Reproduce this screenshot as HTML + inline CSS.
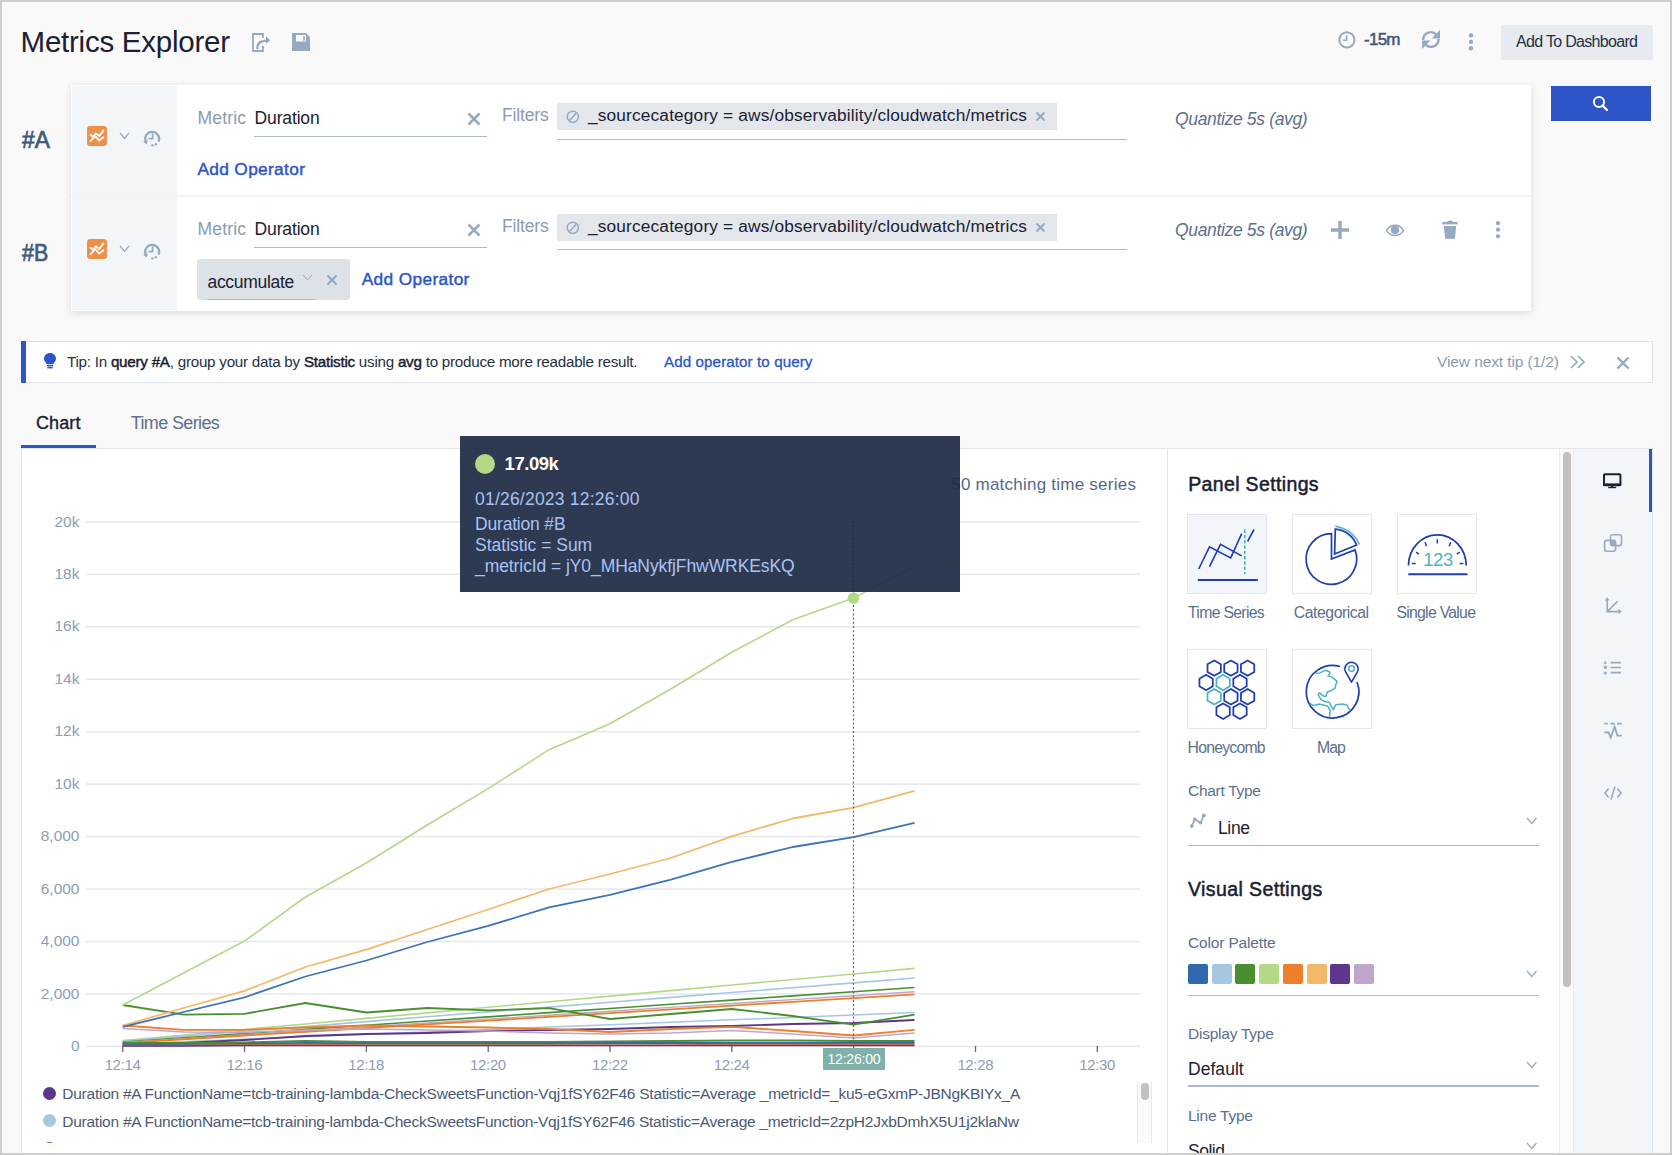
<!DOCTYPE html>
<html><head><meta charset="utf-8"><style>
html,body{margin:0;padding:0}
body{width:1672px;height:1155px;overflow:hidden;background:#cfcfcf;position:relative;font-family:"Liberation Sans",sans-serif}
#pg{position:absolute;left:2px;top:2px;width:1668px;height:1151px;background:#f9f9f9;overflow:hidden}
#in{position:absolute;left:-2px;top:-2px;width:1672px;height:1155px}
.a{position:absolute}
.t{position:absolute;white-space:nowrap;line-height:1}
b{font-weight:normal;-webkit-text-stroke:0.45px currentColor;color:#1b2132}
</style></head><body><div id="pg"><div id="in">
<div class="t" style="left:20.60px;top:27.02px;font-size:29.5px;color:#1b2132;font-weight:normal;font-style:normal;letter-spacing:-0.247px;">Metrics Explorer</div><svg class="a" style="left:250px;top:31px" width="24" height="22" viewBox="0 0 24 22">
<path d="M13 7 V3 H3 V20 H13 V15" fill="none" stroke="#97a9c0" stroke-width="1.8"/>
<path d="M6.2 18 C6.2 12 9 9 14 9 L16 9 L16 5 L20.2 9.2 L16 13 L16 11 C11 11 8.5 13 8.5 18 Z" fill="#97a9c0"/>
</svg><svg class="a" style="left:292px;top:33px" width="18" height="18" viewBox="0 0 18 18">
<path d="M0 0 H14 L18 4 V18 H0 Z M4 2 V8.6 H14 V2 Z" fill="#97a9c0" fill-rule="evenodd"/>
<rect x="11.2" y="3.2" width="1.6" height="4.4" fill="#97a9c0"/>
</svg><svg class="a" style="left:1337px;top:30px" width="20" height="20" viewBox="0 0 20 20">
<circle cx="9.9" cy="9.9" r="7.6" fill="none" stroke="#97a9c0" stroke-width="1.9"/>
<path d="M9.6 5.3 V10.2 H6.2" fill="none" stroke="#97a9c0" stroke-width="1.5"/>
</svg><div class="t" style="left:1364.00px;top:30.91px;font-size:17px;color:#3e5573;font-weight:normal;font-style:normal;letter-spacing:-0.744px;-webkit-text-stroke:0.5px #3e5573">-15m</div><svg class="a" style="left:1420px;top:29px" width="22" height="21" viewBox="0 0 22 21">
<path d="M3.2 11 A7.6 7.6 0 0 1 16.8 6.2" fill="none" stroke="#97a9c0" stroke-width="2.4"/>
<path d="M20 1 V9.5 H11.6 Z" fill="#97a9c0"/>
<path d="M18.6 10 A7.6 7.6 0 0 1 5 14.8" fill="none" stroke="#97a9c0" stroke-width="2.4"/>
<path d="M2 20 V11.5 H10.4 Z" fill="#97a9c0"/>
</svg><svg class="a" style="left:1466px;top:32px" width="10" height="20" viewBox="0 0 10 20">
<circle cx="5" cy="3.4" r="2.2" fill="#97a9c0"/><circle cx="5" cy="9.9" r="2.2" fill="#97a9c0"/><circle cx="5" cy="16.3" r="2.2" fill="#97a9c0"/>
</svg><div class="a" style="left:1501px;top:25px;width:152px;height:35px;background:#e7eaef;border-radius:2px"></div><div class="t" style="left:1516.00px;top:34.35px;font-size:16px;color:#263042;font-weight:normal;font-style:normal;letter-spacing:-0.683px;">Add To Dashboard</div><div class="a" style="left:1551px;top:86px;width:100px;height:35px;background:#2d55c8"></div><svg class="a" style="left:1590px;top:93px" width="20" height="20" viewBox="0 0 20 20">
<circle cx="9" cy="9" r="5.1" fill="none" stroke="#fff" stroke-width="2"/>
<path d="M12.6 12.6 L17 17" stroke="#fff" stroke-width="2.2" stroke-linecap="round"/>
</svg><div class="a" style="left:71px;top:85px;width:1460px;height:226px;background:#fff;box-shadow:0 2px 8px rgba(0,0,0,0.12)"></div><div class="a" style="left:72px;top:86px;width:105px;height:224px;background:#f2f6f9"></div><div class="a" style="left:71px;top:195px;width:1460px;height:1.5px;background:#f3f4f6"></div><div class="t" style="left:22.00px;top:128.50px;font-size:23.5px;color:#405a7a;font-weight:normal;font-style:normal;letter-spacing:0.000px;transform:scaleX(0.9671);transform-origin:0 0;-webkit-text-stroke:0.7px #405a7a">#A</div><svg class="a" style="left:87px;top:126px" width="20" height="20" viewBox="0 0 20 20">
<rect x="0" y="0" width="20" height="20" rx="3" fill="#ef9049"/>
<path d="M3.5 8.9 L6.3 10.8 L9 7.4 L12.3 9.9 L16.4 4.6" fill="none" stroke="#fff" stroke-width="1.9" stroke-linecap="round" stroke-linejoin="round" opacity="0.95"/>
<path d="M3.5 15.1 L8.2 10.2 L12.3 14.6 L16.4 11.3" fill="none" stroke="#fff" stroke-width="1.9" stroke-linecap="round" stroke-linejoin="round" opacity="0.95"/>
</svg><svg class="a" style="left:119px;top:132px" width="11" height="7.5" viewBox="0 0 11 7.5">
<path d="M1 1 L5.5 6.5 L10 1" fill="none" stroke="#97a9c0" stroke-width="1.2"/></svg><svg class="a" style="left:142px;top:128px" width="20" height="20" viewBox="0 0 20 20">
<path d="M3.6 13.2 A7 7 0 1 1 16.6 13.6" fill="none" stroke="#97a9c0" stroke-width="2.2"/>
<path d="M1.2 13.4 L6 12.2 L4.6 16.6 Z" fill="#97a9c0"/>
<path d="M10.6 5.4 V10.6 H6.6" fill="none" stroke="#97a9c0" stroke-width="1.7"/>
<circle cx="10.4" cy="17.4" r="1.2" fill="#97a9c0"/><circle cx="13.8" cy="16.2" r="1.2" fill="#97a9c0"/>
</svg><div class="t" style="left:22.00px;top:242.30px;font-size:23.5px;color:#405a7a;font-weight:normal;font-style:normal;letter-spacing:0.000px;transform:scaleX(0.9115);transform-origin:0 0;-webkit-text-stroke:0.7px #405a7a">#B</div><svg class="a" style="left:87px;top:239px" width="20" height="20" viewBox="0 0 20 20">
<rect x="0" y="0" width="20" height="20" rx="3" fill="#ef9049"/>
<path d="M3.5 8.9 L6.3 10.8 L9 7.4 L12.3 9.9 L16.4 4.6" fill="none" stroke="#fff" stroke-width="1.9" stroke-linecap="round" stroke-linejoin="round" opacity="0.95"/>
<path d="M3.5 15.1 L8.2 10.2 L12.3 14.6 L16.4 11.3" fill="none" stroke="#fff" stroke-width="1.9" stroke-linecap="round" stroke-linejoin="round" opacity="0.95"/>
</svg><svg class="a" style="left:119px;top:245px" width="11" height="7.5" viewBox="0 0 11 7.5">
<path d="M1 1 L5.5 6.5 L10 1" fill="none" stroke="#97a9c0" stroke-width="1.2"/></svg><svg class="a" style="left:142px;top:241px" width="20" height="20" viewBox="0 0 20 20">
<path d="M3.6 13.2 A7 7 0 1 1 16.6 13.6" fill="none" stroke="#97a9c0" stroke-width="2.2"/>
<path d="M1.2 13.4 L6 12.2 L4.6 16.6 Z" fill="#97a9c0"/>
<path d="M10.6 5.4 V10.6 H6.6" fill="none" stroke="#97a9c0" stroke-width="1.7"/>
<circle cx="10.4" cy="17.4" r="1.2" fill="#97a9c0"/><circle cx="13.8" cy="16.2" r="1.2" fill="#97a9c0"/>
</svg><div class="t" style="left:197.50px;top:109.58px;font-size:17.5px;color:#8a9bb1;font-weight:normal;font-style:normal;letter-spacing:0.172px;">Metric</div><div class="t" style="left:254.60px;top:109.58px;font-size:17.5px;color:#1b2132;font-weight:normal;font-style:normal;letter-spacing:-0.150px;">Duration</div><div class="a" style="left:254px;top:135.5px;width:233px;height:1.3px;background:#a9bbce"></div><svg class="a" style="left:467px;top:112px" width="14" height="14" viewBox="0 0 14 14">
<path d="M1.5 1.5 L12.5 12.5 M12.5 1.5 L1.5 12.5" stroke="#97a9c0" stroke-width="2.6"/></svg><div class="t" style="left:502.00px;top:106.68px;font-size:17.5px;color:#8a9bb1;font-weight:normal;font-style:normal;letter-spacing:-0.157px;">Filters</div><div class="a" style="left:557px;top:103px;width:500px;height:27px;background:#e3e7eb"></div><svg class="a" style="left:566px;top:110px" width="14" height="14" viewBox="0 0 14 14">
<circle cx="6.8" cy="6.8" r="5.6" fill="none" stroke="#97a9c0" stroke-width="1.5"/>
<path d="M10.2 3.2 L3.4 10.4" stroke="#97a9c0" stroke-width="1.5"/></svg><div class="t" style="left:588.00px;top:107.35px;font-size:17.3px;color:#1b2132;font-weight:normal;font-style:normal;letter-spacing:0.155px;">_sourcecategory = aws/observability/cloudwatch/metrics</div><svg class="a" style="left:1035px;top:110.5px" width="11" height="11" viewBox="0 0 11 11">
<path d="M1.5 1.5 L9.5 9.5 M9.5 1.5 L1.5 9.5" stroke="#97a9c0" stroke-width="2"/></svg><div class="a" style="left:557px;top:138.6px;width:570px;height:1.3px;background:#a9bbce"></div><div class="t" style="left:1175.00px;top:111.18px;font-size:17.5px;color:#5b708c;font-weight:normal;font-style:italic;letter-spacing:-0.339px;">Quantize 5s (avg)</div><div class="t" style="left:197.50px;top:220.58px;font-size:17.5px;color:#8a9bb1;font-weight:normal;font-style:normal;letter-spacing:0.172px;">Metric</div><div class="t" style="left:254.60px;top:220.58px;font-size:17.5px;color:#1b2132;font-weight:normal;font-style:normal;letter-spacing:-0.150px;">Duration</div><div class="a" style="left:254px;top:246.5px;width:233px;height:1.3px;background:#a9bbce"></div><svg class="a" style="left:467px;top:223px" width="14" height="14" viewBox="0 0 14 14">
<path d="M1.5 1.5 L12.5 12.5 M12.5 1.5 L1.5 12.5" stroke="#97a9c0" stroke-width="2.6"/></svg><div class="t" style="left:502.00px;top:217.68px;font-size:17.5px;color:#8a9bb1;font-weight:normal;font-style:normal;letter-spacing:-0.157px;">Filters</div><div class="a" style="left:557px;top:214px;width:500px;height:27px;background:#e3e7eb"></div><svg class="a" style="left:566px;top:221px" width="14" height="14" viewBox="0 0 14 14">
<circle cx="6.8" cy="6.8" r="5.6" fill="none" stroke="#97a9c0" stroke-width="1.5"/>
<path d="M10.2 3.2 L3.4 10.4" stroke="#97a9c0" stroke-width="1.5"/></svg><div class="t" style="left:588.00px;top:218.35px;font-size:17.3px;color:#1b2132;font-weight:normal;font-style:normal;letter-spacing:0.155px;">_sourcecategory = aws/observability/cloudwatch/metrics</div><svg class="a" style="left:1035px;top:221.5px" width="11" height="11" viewBox="0 0 11 11">
<path d="M1.5 1.5 L9.5 9.5 M9.5 1.5 L1.5 9.5" stroke="#97a9c0" stroke-width="2"/></svg><div class="a" style="left:557px;top:248.79999999999998px;width:570px;height:1.3px;background:#a9bbce"></div><div class="t" style="left:1175.00px;top:222.18px;font-size:17.5px;color:#5b708c;font-weight:normal;font-style:italic;letter-spacing:-0.339px;">Quantize 5s (avg)</div><div class="t" style="left:197.50px;top:160.95px;font-size:17.3px;color:#2d55c8;font-weight:normal;font-style:normal;letter-spacing:0.331px;-webkit-text-stroke:0.45px #2d55c8">Add Operator</div><div class="a" style="left:197px;top:259px;width:153px;height:40.5px;background:#dde1e8;border-radius:3px"></div><div class="t" style="left:207.50px;top:273.78px;font-size:17.5px;color:#1b2132;font-weight:normal;font-style:normal;letter-spacing:-0.310px;">accumulate</div><div class="a" style="left:207px;top:298.5px;width:108px;height:1.3px;background:#a9bbce"></div><svg class="a" style="left:302px;top:274px" width="11" height="7" viewBox="0 0 11 7">
<path d="M1 1 L5.5 6 L10 1" fill="none" stroke="#97a9c0" stroke-width="1"/></svg><svg class="a" style="left:326px;top:274px" width="12" height="12" viewBox="0 0 12 12">
<path d="M1.5 1.5 L10.5 10.5 M10.5 1.5 L1.5 10.5" stroke="#97a9c0" stroke-width="2.2"/></svg><div class="t" style="left:361.70px;top:270.65px;font-size:17.3px;color:#2d55c8;font-weight:normal;font-style:normal;letter-spacing:0.358px;-webkit-text-stroke:0.45px #2d55c8">Add Operator</div><svg class="a" style="left:1330px;top:220px" width="20" height="20" viewBox="0 0 20 20">
<path d="M10 1 V19 M1 10 H19" stroke="#97a9c0" stroke-width="3.4"/></svg><svg class="a" style="left:1385px;top:222.8px" width="20" height="15" viewBox="0 0 20 15">
<path d="M1.6 7.4 C5.5 0.6 14.5 0.6 18.4 7.4 C14.5 14.2 5.5 14.2 1.6 7.4 Z" fill="none" stroke="#97a9c0" stroke-width="1.5"/>
<circle cx="10" cy="6.9" r="4.3" fill="#97a9c0"/></svg><svg class="a" style="left:1442px;top:220px" width="16" height="20" viewBox="0 0 16 20">
<rect x="0.2" y="2" width="15.4" height="2.4" fill="#97a9c0"/><rect x="5.4" y="0.8" width="5.4" height="2" rx="0.8" fill="#97a9c0"/>
<path d="M1.8 6 H14.2 L12.8 18.8 H3.2 Z" fill="#97a9c0"/></svg><svg class="a" style="left:1493px;top:220px" width="10" height="20" viewBox="0 0 10 20">
<circle cx="5" cy="3.2" r="2.1" fill="#97a9c0"/><circle cx="5" cy="9.7" r="2.1" fill="#97a9c0"/><circle cx="5" cy="16.3" r="2.1" fill="#97a9c0"/></svg><div class="a" style="left:21px;top:341px;width:1631px;height:40px;background:#fff;border:1px solid #e0e4e9;border-left:none"></div><div class="a" style="left:21px;top:341px;width:5px;height:42px;background:#2d55c8"></div><svg class="a" style="left:43px;top:352px" width="14" height="18" viewBox="0 0 14 18">
<path d="M7 1 C3.4 1 1 3.6 1 6.6 C1 9 2.6 10.4 3.8 12.2 H10.2 C11.4 10.4 13 9 13 6.6 C13 3.6 10.6 1 7 1 Z" fill="#2d55c8"/>
<rect x="4" y="13" width="6" height="1.4" fill="#2d55c8"/><rect x="4.4" y="15" width="5.2" height="1.4" fill="#2d55c8"/></svg><div class="t" style="left:67px;top:354.13px;font-size:15.2px;color:#263042;letter-spacing:-0.245px">Tip: In <b>query #A</b>, group your data by <b>Statistic</b> using <b>avg</b> to produce more readable result.</div><div class="t" style="left:664.00px;top:354.13px;font-size:15.2px;color:#2d55c8;font-weight:normal;font-style:normal;letter-spacing:0.078px;-webkit-text-stroke:0.3px #2d55c8">Add operator to query</div><div class="t" style="left:1437.00px;top:353.68px;font-size:15.5px;color:#8a9bb1;font-weight:normal;font-style:normal;letter-spacing:-0.099px;">View next tip (1/2)</div><svg class="a" style="left:1569px;top:354px" width="18" height="16" viewBox="0 0 18 16">
<path d="M2 2 L8 8 L2 14 M9 2 L15 8 L9 14" fill="none" stroke="#97a9c0" stroke-width="1.7"/></svg><svg class="a" style="left:1616px;top:355.5px" width="14" height="14" viewBox="0 0 14 14">
<path d="M1.5 1.5 L12.5 12.5 M12.5 1.5 L1.5 12.5" stroke="#97a9c0" stroke-width="2.4"/></svg><div class="t" style="left:36.00px;top:414.26px;font-size:18px;color:#1b2132;font-weight:normal;font-style:normal;letter-spacing:0.096px;-webkit-text-stroke:0.35px #1b2132">Chart</div><div class="t" style="left:130.80px;top:414.26px;font-size:18px;color:#5b708c;font-weight:normal;font-style:normal;letter-spacing:-0.636px;">Time Series</div><div class="a" style="left:21px;top:444.6px;width:75px;height:3px;background:#2d55c8"></div><div class="a" style="left:21px;top:448px;width:1552px;height:720px;background:#fff;border-top:1px solid #e3e7ec;border-left:1px solid #e3e7ec"></div><div class="a" style="left:1167px;top:449px;width:1px;height:720px;background:#e3e7ec"></div><div class="a" style="left:1559px;top:449px;width:14px;height:720px;background:#fafafa;border-left:1px solid #e8eaed"></div><div class="a" style="left:1563px;top:452px;width:8px;height:535px;background:#c1c1c1;border-radius:4px"></div><div class="a" style="left:1573px;top:449px;width:78px;height:720px;background:#f2f6f9;border-left:1px solid #e6e9ed;border-right:1px solid #e4e7eb"></div><div class="a" style="left:1649px;top:449px;width:3px;height:63px;background:#2d55c8"></div><div class="a" style="left:1573px;top:448px;width:80px;height:1px;background:#e3e7ec"></div><svg class="a" style="left:0;top:0" width="1672" height="1155" viewBox="0 0 1672 1155"><rect x="86" y="1045.65" width="1054" height="1.5" fill="#e4e8ee"/><rect x="86" y="993.20" width="1054" height="1.5" fill="#e4e8ee"/><rect x="86" y="940.75" width="1054" height="1.5" fill="#e4e8ee"/><rect x="86" y="888.30" width="1054" height="1.5" fill="#e4e8ee"/><rect x="86" y="835.85" width="1054" height="1.5" fill="#e4e8ee"/><rect x="86" y="783.40" width="1054" height="1.5" fill="#e4e8ee"/><rect x="86" y="730.95" width="1054" height="1.5" fill="#e4e8ee"/><rect x="86" y="678.50" width="1054" height="1.5" fill="#e4e8ee"/><rect x="86" y="626.05" width="1054" height="1.5" fill="#e4e8ee"/><rect x="86" y="573.60" width="1054" height="1.5" fill="#e4e8ee"/><rect x="86" y="521.15" width="1054" height="1.5" fill="#e4e8ee"/><rect x="122.10" y="1046" width="1.3" height="6" fill="#5d6b80"/><rect x="243.92" y="1046" width="1.3" height="6" fill="#5d6b80"/><rect x="365.74" y="1046" width="1.3" height="6" fill="#5d6b80"/><rect x="487.56" y="1046" width="1.3" height="6" fill="#5d6b80"/><rect x="609.38" y="1046" width="1.3" height="6" fill="#5d6b80"/><rect x="731.20" y="1046" width="1.3" height="6" fill="#5d6b80"/><rect x="853.02" y="1046" width="1.3" height="6" fill="#5d6b80"/><rect x="974.84" y="1046" width="1.3" height="6" fill="#5d6b80"/><rect x="1096.66" y="1046" width="1.3" height="6" fill="#5d6b80"/><polyline points="122.70,1040.60 183.61,1035.05 244.52,1029.49 305.43,1023.94 366.34,1018.38 427.25,1012.83 488.16,1007.28 549.07,1001.72 609.98,996.17 670.89,990.62 731.80,985.06 792.71,979.51 853.62,973.95 914.53,968.40" fill="none" stroke="#b3d987" stroke-width="1.6" stroke-linejoin="round"/><polyline points="122.70,1041.00 183.61,1036.15 244.52,1031.31 305.43,1026.46 366.34,1021.62 427.25,1016.77 488.16,1011.92 549.07,1007.08 609.98,1002.23 670.89,997.38 731.80,992.54 792.71,987.69 853.62,982.85 914.53,978.00" fill="none" stroke="#a6c7e0" stroke-width="1.6" stroke-linejoin="round"/><polyline points="122.70,1042.00 183.61,1037.81 244.52,1033.62 305.43,1029.42 366.34,1025.23 427.25,1021.04 488.16,1016.85 549.07,1012.65 609.98,1008.46 670.89,1004.27 731.80,1000.08 792.71,995.88 853.62,991.69 914.53,987.50" fill="none" stroke="#48902f" stroke-width="1.6" stroke-linejoin="round"/><polyline points="122.70,1042.50 183.61,1038.60 244.52,1034.70 305.43,1030.80 366.34,1026.90 427.25,1023.00 488.16,1019.10 549.07,1015.20 609.98,1011.30 670.89,1007.40 731.80,1003.50 792.71,999.60 853.62,995.70 914.53,991.80" fill="none" stroke="#bfa6cd" stroke-width="1.4" stroke-linejoin="round"/><polyline points="122.70,1043.00 183.61,1039.26 244.52,1035.52 305.43,1031.78 366.34,1028.05 427.25,1024.31 488.16,1020.57 549.07,1016.83 609.98,1013.09 670.89,1009.35 731.80,1005.62 792.71,1001.88 853.62,998.14 914.53,994.40" fill="none" stroke="#ec7f2b" stroke-width="1.8" stroke-linejoin="round"/><polyline points="122.70,1044.00 183.61,1041.58 244.52,1039.17 305.43,1036.75 366.34,1034.34 427.25,1031.92 488.16,1029.51 549.07,1027.09 609.98,1024.68 670.89,1022.26 731.80,1019.85 792.71,1017.43 853.62,1015.02 914.53,1012.60" fill="none" stroke="#a6c7e0" stroke-width="1.5" stroke-linejoin="round"/><polyline points="122.70,1044.50 183.61,1043.00 244.52,1040.00 305.43,1036.00 366.34,1034.00 427.25,1033.00 488.16,1031.00 549.07,1030.00 609.98,1029.00 670.89,1027.00 731.80,1026.00 792.71,1024.00 853.62,1023.00 914.53,1020.00" fill="none" stroke="#5b368c" stroke-width="1.8" stroke-linejoin="round"/><polyline points="122.70,1028.50 183.61,1032.00 244.52,1032.50 305.43,1030.00 366.34,1029.00 427.25,1030.00 488.16,1031.00 549.07,1033.00 609.98,1034.00 670.89,1033.00 731.80,1030.50 792.71,1034.00 853.62,1038.00 914.53,1033.00" fill="none" stroke="#bfa6cd" stroke-width="1.5" stroke-linejoin="round"/><polyline points="122.70,1025.50 183.61,1029.80 244.52,1029.80 305.43,1027.50 366.34,1025.50 427.25,1026.50 488.16,1027.50 549.07,1029.00 609.98,1032.00 670.89,1029.00 731.80,1026.80 792.71,1031.00 853.62,1035.50 914.53,1029.90" fill="none" stroke="#ec7f2b" stroke-width="1.8" stroke-linejoin="round"/><polyline points="122.70,1005.00 183.61,1014.60 244.52,1013.80 305.43,1003.00 366.34,1012.50 427.25,1008.00 488.16,1010.30 549.07,1008.20 609.98,1019.00 670.89,1014.00 731.80,1009.00 792.71,1016.00 853.62,1024.70 914.53,1014.70" fill="none" stroke="#48902f" stroke-width="1.8" stroke-linejoin="round"/><polyline points="122.70,1043.00 183.61,1043.00 244.52,1042.50 305.43,1041.00 366.34,1042.00 427.25,1042.00 488.16,1042.00 549.07,1042.00 609.98,1041.50 670.89,1041.00 731.80,1040.50 792.71,1040.50 853.62,1041.00 914.53,1041.00" fill="none" stroke="#48902f" stroke-width="2.2" stroke-linejoin="round"/><polyline points="122.70,1044.50 183.61,1044.50 244.52,1044.00 305.43,1043.00 366.34,1043.50 427.25,1043.50 488.16,1043.50 549.07,1043.50 609.98,1043.00 670.89,1043.00 731.80,1043.00 792.71,1043.00 853.62,1043.00 914.53,1043.00" fill="none" stroke="#2f6aac" stroke-width="2.2" stroke-linejoin="round"/><polyline points="122.70,1045.50 183.61,1045.50 244.52,1045.00 305.43,1044.50 366.34,1045.00 427.25,1045.00 488.16,1045.00 549.07,1045.00 609.98,1045.00 670.89,1045.00 731.80,1044.50 792.71,1044.50 853.62,1044.50 914.53,1044.50" fill="none" stroke="#ec7f2b" stroke-width="1.4" stroke-linejoin="round"/><polyline points="122.70,1046.00 183.61,1046.00 244.52,1045.50 305.43,1045.50 366.34,1045.50 427.25,1045.50 488.16,1045.50 549.07,1045.50 609.98,1045.50 670.89,1045.50 731.80,1045.50 792.71,1045.50 853.62,1045.50 914.53,1045.50" fill="none" stroke="#5b368c" stroke-width="1.6" stroke-linejoin="round"/><polyline points="122.70,1025.50 183.61,1008.00 244.52,990.80 305.43,967.00 366.34,949.70 427.25,929.50 488.16,909.50 549.07,889.00 609.98,874.00 670.89,858.00 731.80,836.30 792.71,818.50 853.62,807.70 914.53,790.80" fill="none" stroke="#f2b969" stroke-width="1.8" stroke-linejoin="round"/><polyline points="122.70,1026.80 183.61,1012.00 244.52,997.30 305.43,976.50 366.34,960.50 427.25,942.00 488.16,925.90 549.07,907.30 609.98,894.80 670.89,879.60 731.80,861.90 792.71,847.00 853.62,837.20 914.53,822.90" fill="none" stroke="#3d74b4" stroke-width="1.8" stroke-linejoin="round"/><polyline points="122.70,1005.00 183.61,973.00 244.52,941.00 305.43,897.00 366.34,863.00 427.25,825.00 488.16,788.60 549.07,749.70 609.98,723.70 670.89,689.00 731.80,652.20 792.71,619.80 853.62,598.10 914.53,566.00" fill="none" stroke="#b3d987" stroke-width="1.6" stroke-linejoin="round"/><line x1="853.5" y1="521" x2="853.5" y2="1046" stroke="#b04a3c" stroke-width="1.2" stroke-dasharray="2,2.2"/><circle cx="853.5" cy="598.2" r="5.8" fill="#b3d987"/></svg><div class="t" style="right:1592.5px;top:1038.08px;font-size:15.5px;color:#8d9db3;text-align:right">0</div><div class="t" style="right:1592.5px;top:985.63px;font-size:15.5px;color:#8d9db3;text-align:right">2,000</div><div class="t" style="right:1592.5px;top:933.18px;font-size:15.5px;color:#8d9db3;text-align:right">4,000</div><div class="t" style="right:1592.5px;top:880.73px;font-size:15.5px;color:#8d9db3;text-align:right">6,000</div><div class="t" style="right:1592.5px;top:828.28px;font-size:15.5px;color:#8d9db3;text-align:right">8,000</div><div class="t" style="right:1592.5px;top:775.83px;font-size:15.5px;color:#8d9db3;text-align:right">10k</div><div class="t" style="right:1592.5px;top:723.38px;font-size:15.5px;color:#8d9db3;text-align:right">12k</div><div class="t" style="right:1592.5px;top:670.93px;font-size:15.5px;color:#8d9db3;text-align:right">14k</div><div class="t" style="right:1592.5px;top:618.48px;font-size:15.5px;color:#8d9db3;text-align:right">16k</div><div class="t" style="right:1592.5px;top:566.03px;font-size:15.5px;color:#8d9db3;text-align:right">18k</div><div class="t" style="right:1592.5px;top:513.58px;font-size:15.5px;color:#8d9db3;text-align:right">20k</div><div class="t" style="left:104.65px;top:1057.20px;font-size:15px;color:#8d9db3;font-weight:normal;font-style:normal;letter-spacing:-0.359px;">12:14</div><div class="t" style="left:226.47px;top:1057.20px;font-size:15px;color:#8d9db3;font-weight:normal;font-style:normal;letter-spacing:-0.359px;">12:16</div><div class="t" style="left:348.29px;top:1057.20px;font-size:15px;color:#8d9db3;font-weight:normal;font-style:normal;letter-spacing:-0.359px;">12:18</div><div class="t" style="left:470.11px;top:1057.20px;font-size:15px;color:#8d9db3;font-weight:normal;font-style:normal;letter-spacing:-0.359px;">12:20</div><div class="t" style="left:591.93px;top:1057.20px;font-size:15px;color:#8d9db3;font-weight:normal;font-style:normal;letter-spacing:-0.359px;">12:22</div><div class="t" style="left:713.75px;top:1057.20px;font-size:15px;color:#8d9db3;font-weight:normal;font-style:normal;letter-spacing:-0.359px;">12:24</div><div class="t" style="left:835.57px;top:1057.20px;font-size:15px;color:#8d9db3;font-weight:normal;font-style:normal;letter-spacing:-0.359px;">12:26</div><div class="t" style="left:957.39px;top:1057.20px;font-size:15px;color:#8d9db3;font-weight:normal;font-style:normal;letter-spacing:-0.359px;">12:28</div><div class="t" style="left:1079.21px;top:1057.20px;font-size:15px;color:#8d9db3;font-weight:normal;font-style:normal;letter-spacing:-0.359px;">12:30</div><div class="a" style="left:823px;top:1047.5px;width:61.5px;height:22px;background:#7fb0aa"></div><div class="t" style="left:827.50px;top:1051.95px;font-size:14px;color:#fff;font-weight:normal;font-style:normal;letter-spacing:-0.214px;">12:26:00</div><div class="t" style="left:951.20px;top:475.71px;font-size:17px;color:#54698a;font-weight:normal;font-style:normal;letter-spacing:0.235px;">50 matching time series</div><div class="a" style="left:22px;top:1080px;width:1130px;height:63px;overflow:hidden"><div class="a" style="left:21px;top:6.50px;width:13px;height:13px;border-radius:50%;background:#5b368c"></div><div class="t" style="left:40.30px;top:5.78px;font-size:15.5px;color:#4a5a75;font-weight:normal;font-style:normal;letter-spacing:-0.252px;">Duration #A FunctionName=tcb-training-lambda-CheckSweetsFunction-Vqj1fSY62F46 Statistic=Average _metricId=_ku5-eGxmP-JBNgKBIYx_A</div><div class="a" style="left:21px;top:34.40px;width:13px;height:13px;border-radius:50%;background:#a6c7e0"></div><div class="t" style="left:40.30px;top:33.68px;font-size:15.5px;color:#4a5a75;font-weight:normal;font-style:normal;letter-spacing:-0.256px;">Duration #A FunctionName=tcb-training-lambda-CheckSweetsFunction-Vqj1fSY62F46 Statistic=Average _metricId=2zpH2JxbDmhX5U1j2klaNw</div><div class="a" style="left:21px;top:62.30px;width:13px;height:13px;border-radius:50%;background:#48902f"></div><div class="t" style="left:40.30px;top:61.58px;font-size:15.5px;color:#4a5a75;font-weight:normal;font-style:normal;letter-spacing:0.072px;">Duration #A FunctionName=tcb-training-lambda-CheckSweetsFunction-Vqj1fSY62F46 Statistic=Average _metricId=abcdEfghIjklMnopQrst</div></div><div class="a" style="left:1137px;top:1081.5px;width:13px;height:61px;background:#fafafa;border-left:1px solid #e8e8e8;border-right:1px solid #e8e8e8"></div><div class="a" style="left:1141px;top:1082.5px;width:8px;height:17px;background:#c1c1c1;border-radius:4px"></div><div class="a" style="left:460px;top:436px;width:500px;height:155.5px;background:rgba(28,41,67,0.92)"></div><div class="a" style="left:475px;top:454px;width:20px;height:20px;border-radius:50%;background:#b3d987"></div><div class="t" style="left:504.60px;top:455.04px;font-size:18.5px;color:#fff;font-weight:bold;font-style:normal;letter-spacing:-0.457px;">17.09k</div><div class="t" style="left:475.00px;top:490.78px;font-size:17.5px;color:#a9c2f2;font-weight:normal;font-style:normal;letter-spacing:0.213px;">01/26/2023 12:26:00</div><div class="t" style="left:475.00px;top:515.68px;font-size:17.5px;color:#a9c2f2;font-weight:normal;font-style:normal;letter-spacing:-0.185px;">Duration #B</div><div class="t" style="left:475.00px;top:536.68px;font-size:17.5px;color:#a9c2f2;font-weight:normal;font-style:normal;letter-spacing:0.000px;">Statistic = Sum</div><div class="t" style="left:475.00px;top:557.68px;font-size:17.5px;color:#a9c2f2;font-weight:normal;font-style:normal;letter-spacing:-0.081px;">_metricId = jY0_MHaNykfjFhwWRKEsKQ</div><div class="t" style="left:1188.20px;top:474.59px;font-size:19.5px;color:#1b2132;font-weight:normal;font-style:normal;letter-spacing:0.357px;-webkit-text-stroke:0.5px #1b2132">Panel Settings</div><div class="a" style="left:1187px;top:514px;width:78px;height:78px;background:#f2f5f9;border:1px solid #e3e7ed"></div><svg class="a" style="left:1187px;top:514px" width="80" height="80" viewBox="0 0 80 80"><path d="M10.8 66 H70.8" stroke="#1f3db0" stroke-width="1.9"/>
<path d="M11.7 55 L22.5 32.9 L43.7 43.9 L54.7 19.7" fill="none" stroke="#1f3db0" stroke-width="1.6"/>
<path d="M22.5 52.6 L33.5 30.3 L54.7 41.9" fill="none" stroke="#1f3db0" stroke-width="1.6"/>
<path d="M57.8 15.5 V60.2" stroke="#4bb2c5" stroke-width="1.6" stroke-dasharray="3.4,1.9"/>
<path d="M60.6 27.5 L67 15.5" stroke="#1f3db0" stroke-width="1.6"/></svg><div class="a" style="left:1292px;top:514px;width:78px;height:78px;background:#fff;border:1px solid #e3e7ed"></div><svg class="a" style="left:1292px;top:514px" width="80" height="80" viewBox="0 0 80 80"><path d="M39.5 19.7 A25.3 25.3 0 1 0 63 35.9 L39.5 45 Z" fill="none" stroke="#1f3db0" stroke-width="1.7"/>
<path d="M43.3 15.2 A24.5 24.5 0 0 1 64.6 31.1 L42.6 40 Z" fill="none" stroke="#1f3db0" stroke-width="1.7"/>
<path d="M43.3 12.3 A33 33 0 0 1 67.6 30.5" fill="none" stroke="#4bb2c5" stroke-width="1.5"/></svg><div class="a" style="left:1397px;top:514px;width:78px;height:78px;background:#fff;border:1px solid #e3e7ed"></div><svg class="a" style="left:1397px;top:514px" width="80" height="80" viewBox="0 0 80 80"><path d="M11.5 51.6 A28.8 30.6 0 0 1 69.2 51.6" fill="none" stroke="#1f3db0" stroke-width="1.8"/>
<path d="M11.3 60.3 H70.5" stroke="#1f3db0" stroke-width="1.9"/>
<path d="M15 49.6 H18.7 M62.7 49.6 H66.4 M19.1 38.1 L22 40.1 M62.7 38.1 L59.8 40.1 M40.3 25.3 V29.4 M28.1 28.2 L29.5 32.3 M53.6 28.2 L52.2 32.3" stroke="#1f3db0" stroke-width="1.5"/>
<text x="41" y="51.6" text-anchor="middle" font-family="Liberation Sans" font-size="18.5" fill="#4bb2c5" letter-spacing="-0.5">123</text></svg><div class="a" style="left:1187px;top:649px;width:78px;height:78px;background:#fff;border:1px solid #e3e7ed"></div><svg class="a" style="left:1187px;top:649px" width="80" height="80" viewBox="0 0 80 80"><polygon points="27.20,11.40 33.87,15.25 33.87,22.95 27.20,26.80 20.53,22.95 20.53,15.25" fill="none" stroke="#1f3db0" stroke-width="1.75"/><polygon points="43.90,11.40 50.57,15.25 50.57,22.95 43.90,26.80 37.23,22.95 37.23,15.25" fill="none" stroke="#1f3db0" stroke-width="1.75"/><polygon points="60.60,11.40 67.27,15.25 67.27,22.95 60.60,26.80 53.93,22.95 53.93,15.25" fill="none" stroke="#1f3db0" stroke-width="1.75"/><polygon points="19.10,25.80 25.77,29.65 25.77,37.35 19.10,41.20 12.43,37.35 12.43,29.65" fill="none" stroke="#1f3db0" stroke-width="1.75"/><polygon points="36.10,25.80 42.77,29.65 42.77,37.35 36.10,41.20 29.43,37.35 29.43,29.65" fill="none" stroke="#4bb2c5" stroke-width="1.75"/><polygon points="53.00,25.80 59.67,29.65 59.67,37.35 53.00,41.20 46.33,37.35 46.33,29.65" fill="none" stroke="#1f3db0" stroke-width="1.75"/><polygon points="27.20,40.10 33.87,43.95 33.87,51.65 27.20,55.50 20.53,51.65 20.53,43.95" fill="none" stroke="#4bb2c5" stroke-width="1.75"/><polygon points="43.90,40.10 50.57,43.95 50.57,51.65 43.90,55.50 37.23,51.65 37.23,43.95" fill="none" stroke="#1f3db0" stroke-width="1.75"/><polygon points="60.60,40.10 67.27,43.95 67.27,51.65 60.60,55.50 53.93,51.65 53.93,43.95" fill="none" stroke="#1f3db0" stroke-width="1.75"/><polygon points="36.10,54.50 42.77,58.35 42.77,66.05 36.10,69.90 29.43,66.05 29.43,58.35" fill="none" stroke="#1f3db0" stroke-width="1.75"/><polygon points="53.00,54.50 59.67,58.35 59.67,66.05 53.00,69.90 46.33,66.05 46.33,58.35" fill="none" stroke="#1f3db0" stroke-width="1.75"/></svg><div class="a" style="left:1292px;top:649px;width:78px;height:78px;background:#fff;border:1px solid #e3e7ed"></div><svg class="a" style="left:1292px;top:649px" width="80" height="80" viewBox="0 0 80 80"><path d="M48 17.5 A26.3 26.3 0 1 0 65 33" fill="none" stroke="#1f3db0" stroke-width="1.7"/>
<path d="M59.5 33.2 L53.6 22.8 A6.6 6.6 0 1 1 65.4 22.8 Z" fill="none" stroke="#1f3db0" stroke-width="1.6" stroke-linejoin="round"/>
<circle cx="59.5" cy="19.6" r="2.8" fill="none" stroke="#4bb2c5" stroke-width="1.5"/>
<path d="M23.8 24.2 L28 23.9 L33.5 21.2 L37.7 23 L38 24.5 L35.9 26.9 L40.1 28.1 L45 32.4 L43.8 35.7 L43.2 39 L40.1 41.2 L35.3 43 L34 47.2 L31.6 47.2 L27.4 43.9 L26.2 45.4 L28.6 50.2 L32.2 52.4 L37.1 53.3 L38.9 56.3 L41.3 60.8 L43.8 55.7 L50.4 55.1 L55.3 56.3 L56.5 59.3 L58.9 60.8" fill="none" stroke="#4bb2c5" stroke-width="1.5" stroke-linejoin="round"/>
<path d="M17.7 54.5 L22 56.6 L28 55.1 L35.9 57.2 L38.3 61.8 L37.7 64.8 L37.7 68.6" fill="none" stroke="#4bb2c5" stroke-width="1.5" stroke-linejoin="round"/></svg><div class="t" style="left:1188.00px;top:604.82px;font-size:15.8px;color:#5b708c;font-weight:normal;font-style:normal;letter-spacing:-0.700px;">Time Series</div><div class="t" style="left:1293.80px;top:604.82px;font-size:15.8px;color:#5b708c;font-weight:normal;font-style:normal;letter-spacing:-0.462px;">Categorical</div><div class="t" style="left:1396.40px;top:604.82px;font-size:15.8px;color:#5b708c;font-weight:normal;font-style:normal;letter-spacing:-0.723px;">Single Value</div><div class="t" style="left:1187.60px;top:739.62px;font-size:15.8px;color:#5b708c;font-weight:normal;font-style:normal;letter-spacing:-0.789px;">Honeycomb</div><div class="t" style="left:1317.00px;top:739.62px;font-size:15.8px;color:#5b708c;font-weight:normal;font-style:normal;letter-spacing:-0.919px;">Map</div><div class="t" style="left:1188.00px;top:782.88px;font-size:15.5px;color:#5b708c;font-weight:normal;font-style:normal;letter-spacing:-0.282px;">Chart Type</div><svg class="a" style="left:1189px;top:813px" width="18" height="16" viewBox="0 0 18 16">
<path d="M2.7 13.1 L5.8 6.4 L11.6 9.7 L14.9 2.5" fill="none" stroke="#97a9c0" stroke-width="1.7"/>
<circle cx="2.7" cy="13.1" r="1.9" fill="#97a9c0"/><circle cx="5.8" cy="6.4" r="1.8" fill="#97a9c0"/><circle cx="11.6" cy="9.7" r="1.8" fill="#97a9c0"/><circle cx="14.9" cy="2.5" r="1.9" fill="#97a9c0"/></svg><div class="t" style="left:1218.00px;top:820.38px;font-size:17.5px;color:#1b2132;font-weight:normal;font-style:normal;letter-spacing:-0.362px;">Line</div><svg class="a" style="left:1526px;top:817px" width="11.5" height="7.5" viewBox="0 0 11.5 7.5">
<path d="M1 1 L5.75 6.5 L10.5 1" fill="none" stroke="#97a9c0" stroke-width="1.2"/></svg><div class="a" style="left:1188px;top:844.6px;width:351px;height:1.4px;background:#a9bbce"></div><div class="t" style="left:1188.00px;top:880.19px;font-size:19.5px;color:#1b2132;font-weight:normal;font-style:normal;letter-spacing:0.404px;-webkit-text-stroke:0.5px #1b2132">Visual Settings</div><div class="t" style="left:1188.00px;top:934.58px;font-size:15.5px;color:#5b708c;font-weight:normal;font-style:normal;letter-spacing:-0.159px;">Color Palette</div><div class="a" style="left:1188.00px;top:964px;width:20px;height:20px;border-radius:2px;background:#2f6aac"></div><div class="a" style="left:1211.70px;top:964px;width:20px;height:20px;border-radius:2px;background:#a6c7e0"></div><div class="a" style="left:1235.40px;top:964px;width:20px;height:20px;border-radius:2px;background:#48902f"></div><div class="a" style="left:1259.10px;top:964px;width:20px;height:20px;border-radius:2px;background:#b3d987"></div><div class="a" style="left:1282.80px;top:964px;width:20px;height:20px;border-radius:2px;background:#ec7f2b"></div><div class="a" style="left:1306.50px;top:964px;width:20px;height:20px;border-radius:2px;background:#f2b969"></div><div class="a" style="left:1330.20px;top:964px;width:20px;height:20px;border-radius:2px;background:#5b368c"></div><div class="a" style="left:1353.90px;top:964px;width:20px;height:20px;border-radius:2px;background:#bfa6cd"></div><svg class="a" style="left:1526px;top:970px" width="11.5" height="7.5" viewBox="0 0 11.5 7.5">
<path d="M1 1 L5.75 6.5 L10.5 1" fill="none" stroke="#97a9c0" stroke-width="1.2"/></svg><div class="a" style="left:1188px;top:994.6px;width:351px;height:1.4px;background:#a9bbce"></div><div class="t" style="left:1188.00px;top:1025.58px;font-size:15.5px;color:#5b708c;font-weight:normal;font-style:normal;letter-spacing:-0.241px;">Display Type</div><div class="t" style="left:1188.00px;top:1061.38px;font-size:17.5px;color:#1b2132;font-weight:normal;font-style:normal;letter-spacing:0.042px;">Default</div><svg class="a" style="left:1526px;top:1061px" width="11.5" height="7.5" viewBox="0 0 11.5 7.5">
<path d="M1 1 L5.75 6.5 L10.5 1" fill="none" stroke="#97a9c0" stroke-width="1.2"/></svg><div class="a" style="left:1188px;top:1085.3px;width:351px;height:1.4px;background:#a9bbce"></div><div class="t" style="left:1188.00px;top:1107.58px;font-size:15.5px;color:#5b708c;font-weight:normal;font-style:normal;letter-spacing:-0.251px;">Line Type</div><div class="t" style="left:1188.00px;top:1143.18px;font-size:17.5px;color:#1b2132;font-weight:normal;font-style:normal;letter-spacing:-0.486px;">Solid</div><svg class="a" style="left:1526px;top:1142px" width="11.5" height="7.5" viewBox="0 0 11.5 7.5">
<path d="M1 1 L5.75 6.5 L10.5 1" fill="none" stroke="#97a9c0" stroke-width="1.2"/></svg><svg class="a" style="left:1602px;top:472px" width="20" height="17" viewBox="0 0 20 17">
<rect x="2" y="2.2" width="16.4" height="11" rx="1" fill="none" stroke="#1b2132" stroke-width="2"/>
<rect x="1.2" y="11.4" width="18" height="2.6" fill="#1b2132"/>
<rect x="9.2" y="13" width="2" height="2.4" fill="#1b2132"/><rect x="6.2" y="14.8" width="8" height="1.4" fill="#1b2132"/></svg><svg class="a" style="left:1603px;top:533px" width="20" height="20" viewBox="0 0 20 20">
<rect x="7.5" y="1.8" width="11" height="10.8" rx="2.2" fill="none" stroke="#9aaabe" stroke-width="1.6"/>
<rect x="1.6" y="7.4" width="11" height="10.8" rx="2.2" fill="none" stroke="#9aaabe" stroke-width="1.6"/>
<rect x="7.5" y="7.4" width="5.1" height="5.2" fill="#9aaabe"/></svg><svg class="a" style="left:1603px;top:595px" width="20" height="20" viewBox="0 0 20 20">
<path d="M4.2 4 V16.6 H16.6 M4.2 16.6 L14.6 6.2" fill="none" stroke="#9aaabe" stroke-width="1.6"/>
<path d="M1.6 5.6 L4.2 2.2 L6.8 5.6 Z M15.4 14 L18.8 16.6 L15.4 19.2 Z" fill="#9aaabe"/></svg><svg class="a" style="left:1603px;top:659px" width="20" height="18" viewBox="0 0 20 18">
<path d="M2.2 1.6 L3.9 4.8 H0.5 Z" fill="#9aaabe"/><rect x="0.8" y="6.8" width="3" height="3" fill="#9aaabe"/><circle cx="2.3" cy="14" r="1.6" fill="#9aaabe"/>
<path d="M7.5 3.6 H18 M7.5 8.5 H18 M7.5 13.6 H18" stroke="#9aaabe" stroke-width="1.6"/></svg><svg class="a" style="left:1603px;top:720px" width="20" height="20" viewBox="0 0 20 20">
<path d="M1.2 3.6 H4.8 M7.4 3.6 H11.6 M14.2 3.6 H18.8" stroke="#9aaabe" stroke-width="1.8"/>
<path d="M1.2 12.4 H5.6 L7.8 17.6 L11.6 6.8 L14.4 15.6 H18.8" fill="none" stroke="#9aaabe" stroke-width="1.9"/></svg><svg class="a" style="left:1603px;top:785px" width="20" height="16" viewBox="0 0 20 16">
<path d="M5.6 3.4 L2 8 L5.6 12.4 M14.4 3.4 L18 8 L14.4 12.4 M12 1.4 L8 14.6" fill="none" stroke="#9aaabe" stroke-width="1.6"/></svg>
</div></div></body></html>
